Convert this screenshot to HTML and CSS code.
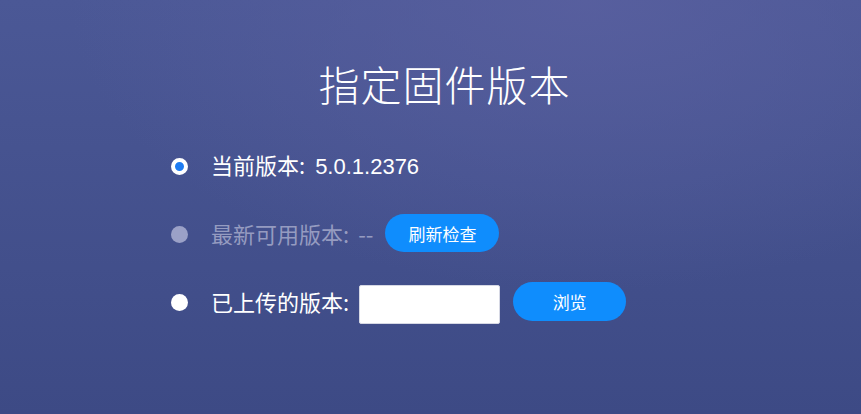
FILE: index.html
```html
<!DOCTYPE html>
<html lang="zh-CN">
<head>
<meta charset="utf-8">
<title>指定固件版本</title>
<link rel="stylesheet" href="styles.css">
</head>
<body>
<main class="page">
  <h1 class="title">指定固件版本</h1>
  <div class="options">
    <div class="row">
      <span class="radio radio-checked"></span>
      <span class="label">当前版本:<span class="value">5.0.1.2376</span></span>
    </div>
    <div class="row row-disabled">
      <span class="radio radio-disabled"></span>
      <span class="label">最新可用版本:<span class="dash">--</span></span>
      <button class="btn btn-refresh" type="button">刷新检查</button>
    </div>
    <div class="row">
      <span class="radio radio-plain"></span>
      <span class="label">已上传的版本:</span>
      <input class="file-input" type="text">
      <button class="btn btn-browse" type="button">浏览</button>
    </div>
  </div>
</main>
</body>
</html>
```

FILE: styles.css
```css
html, body {
  margin: 0;
  padding: 0;
  height: 100%;
}
body {
  background:
    radial-gradient(ellipse 60% 70% at 68% 0%, rgba(90, 96, 160, 0.8), rgba(90, 96, 160, 0) 100%),
    linear-gradient(180deg, #4b5896 0%, #3d4a85 100%);
  font-family: "Noto Sans CJK SC", "Noto Sans", sans-serif;
  color: #ffffff;
  overflow: hidden;
}
.page {
  padding-top: 59px;
}
.title {
  margin: 0;
  padding-left: 28px;
  text-align: center;
  font-size: 41px;
  line-height: 48px;
  font-weight: 300;
  letter-spacing: 1px;
}
.options {
  margin-top: 39px;
  padding-left: 171px;
  display: flex;
  flex-direction: column;
  gap: 28px;
}
.row {
  display: flex;
  align-items: center;
  height: 40px;
}
.radio {
  width: 17px;
  height: 17px;
  border-radius: 50%;
  box-sizing: border-box;
  margin-right: 23px;
  flex: none;
}
.radio-checked {
  background: #1e7cf2;
  border: 4px solid #ffffff;
}
.radio-disabled {
  background: #9ba1c7;
}
.radio-plain {
  background: #ffffff;
}
.label {
  font-size: 22px;
  line-height: 30px;
  white-space: nowrap;
  margin-top: -2px;
}
.value {
  font-family: "Liberation Sans", "Noto Sans", sans-serif;
  font-size: 22px;
  margin-left: 10px;
}
.dash {
  margin-left: 9px;
}
.row-disabled .label {
  color: #959bc0;
}
.btn {
  border: none;
  border-radius: 20px;
  background: #0f8dfd;
  color: #ffffff;
  font-family: "Noto Sans CJK SC", sans-serif;
  font-size: 17px;
  padding: 0;
  cursor: pointer;
}
.btn-refresh {
  width: 114px;
  height: 38px;
  margin-left: 12px;
  margin-top: -2px;
}
.file-input {
  width: 141px;
  height: 39px;
  box-sizing: border-box;
  margin-left: 10px;
  border: 1px solid #d6d8e4;
  border-radius: 2px;
  background: #ffffff;
  margin-top: 5px;
}
.btn-browse {
  width: 113px;
  height: 39px;
  margin-left: 13px;
  margin-top: -1px;
}
```
